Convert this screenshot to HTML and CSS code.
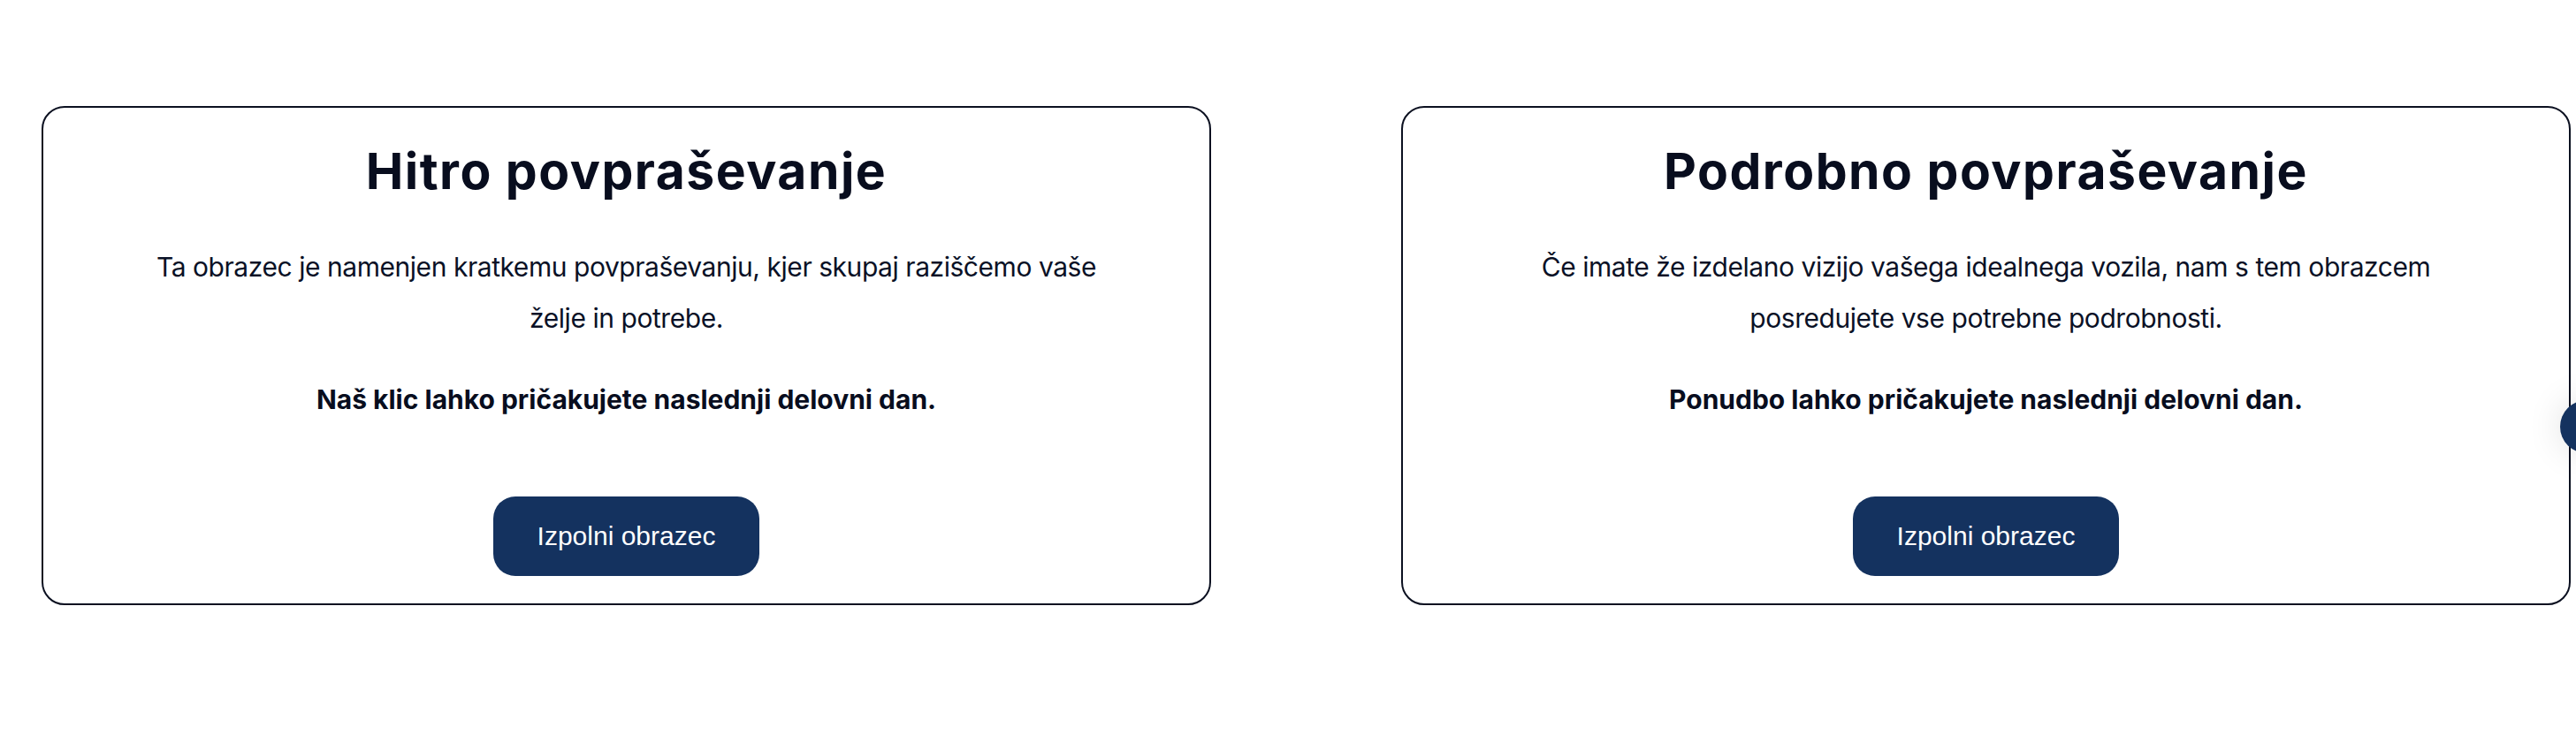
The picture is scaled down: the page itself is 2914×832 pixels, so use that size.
FILE: index.html
```html
<!DOCTYPE html>
<html lang="sl">
<head>
<meta charset="utf-8">
<title>Povpraševanje</title>
<link rel="stylesheet" href="styles.css">
</head>
<body>
<main class="cards">
  <section class="card">
    <h2 class="card-title">Hitro povpraševanje</h2>
    <p class="card-text">Ta obrazec je namenjen kratkemu povpraševanju, kjer skupaj raziščemo vaše želje in potrebe.</p>
    <p class="card-note">Naš klic lahko pričakujete naslednji delovni dan.</p>
    <a class="btn" href="#">Izpolni obrazec</a>
  </section>
  <section class="card">
    <h2 class="card-title">Podrobno povpraševanje</h2>
    <p class="card-text">Če imate že izdelano vizijo vašega idealnega vozila, nam s tem obrazcem posredujete vse potrebne podrobnosti.</p>
    <p class="card-note">Ponudbo lahko pričakujete naslednji delovni dan.</p>
    <a class="btn" href="#">Izpolni obrazec</a>
  </section>
</main>
<button class="chat-fab" aria-label="Klepet"></button>
</body>
</html>
```

FILE: styles.css
```css
html, body {
  margin: 0;
  padding: 0;
  background: #ffffff;
  overflow: hidden;
}

body {
  font-family: Inter, "Noto Sans", sans-serif;
  color: #0a1024;
}

.cards {
  display: flex;
  gap: 215px;
  padding: 120px 0 0 47px;
}

.card {
  box-sizing: border-box;
  width: 1323px;
  flex: none;
  border: 2px solid #0b1020;
  border-radius: 26px;
  display: flex;
  flex-direction: column;
  align-items: center;
  padding: 38px 0 31px;
  text-align: center;
}

.card-title {
  margin: 0;
  font-size: 57px;
  line-height: 67px;
  font-weight: 700;
  color: #080d1e;
  letter-spacing: 1.5px;
}

.card-text {
  margin: 47px 0 0;
  max-width: 1100px;
  font-size: 30px;
  line-height: 57.6px;
  font-weight: 400;
  letter-spacing: -0.45px;
  color: #0a1126;
}

.card-note {
  margin: 38px 0 0;
  font-size: 30px;
  line-height: 50px;
  font-weight: 700;
  color: #080d1e;
}

.btn {
  margin-top: 85px;
  box-sizing: border-box;
  height: 90px;
  padding: 0 50px;
  display: flex;
  align-items: center;
  justify-content: center;
  background: #14325f;
  color: #ffffff;
  border-radius: 25px;
  font-family: "Liberation Sans", Arial, sans-serif;
  font-size: 30px;
  text-decoration: none;
}

.chat-fab {
  position: fixed;
  left: 2896px;
  top: 453px;
  width: 60px;
  height: 60px;
  border: none;
  border-radius: 50%;
  background: #14325f;
  box-shadow: 0 0 40px rgba(0, 0, 0, 0.12);
  padding: 0;
}
```
